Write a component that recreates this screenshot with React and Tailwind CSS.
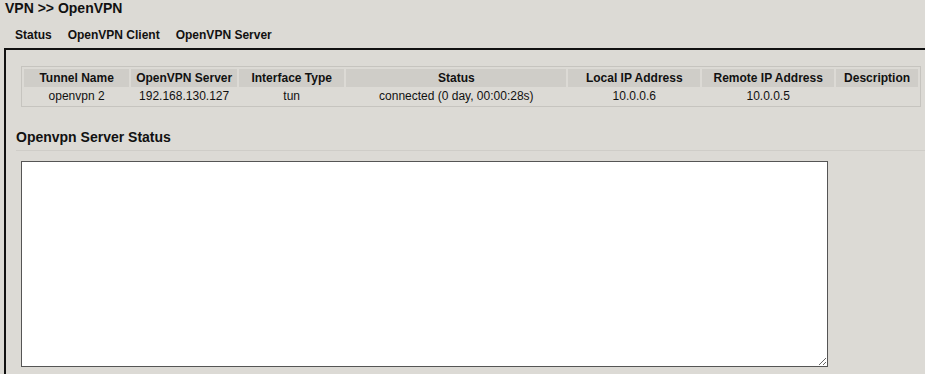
export default function App() {
  const cols = [
    { label: 'Tunnel Name', w: 'w-[106px]', value: 'openvpn 2' },
    { label: 'OpenVPN Server', w: 'w-[106px]', value: '192.168.130.127' },
    { label: 'Interface Type', w: 'w-[106px]', value: 'tun' },
    { label: 'Status', w: 'w-[222px]', value: 'connected (0 day, 00:00:28s)' },
    { label: 'Local IP Address', w: 'w-[133px]', value: '10.0.0.6' },
    { label: 'Remote IP Address', w: 'w-[133px]', value: '10.0.0.5' },
    { label: 'Description', w: 'w-[82px]', value: '' },
  ]

  return (
    <div className="h-[374px] w-[925px] overflow-hidden bg-[#dcdad5] font-['Liberation_Sans',Arial,sans-serif] text-[#111]">
      <h1 className="pl-[5px] pt-0 text-[14px] font-bold leading-[16px]">VPN &gt;&gt; OpenVPN</h1>
      <nav className="mt-[12px] flex gap-[16px] pl-[15px] text-[12px] font-bold leading-[15px]">
        <span>Status</span>
        <span>OpenVPN Client</span>
        <span>OpenVPN Server</span>
      </nav>
      <section className="ml-[4px] mt-[5px] h-[400px] border-l-2 border-t-2 border-[#111] pl-[15px] pt-[16px]">
        <table className="w-[900px] border-separate border-spacing-[2px] border border-[#c6c4bf] text-[12px]">
          <thead>
            <tr>
              {cols.map((c) => (
                <th key={c.label} className={`${c.w} h-[18px] bg-[#cfcdc8] p-0 text-center font-bold leading-[18px]`}>
                  {c.label}
                </th>
              ))}
            </tr>
          </thead>
          <tbody>
            <tr>
              {cols.map((c) => (
                <td key={c.label} className="h-[15px] p-0 text-center leading-[15px]">
                  {c.value}
                </td>
              ))}
            </tr>
          </tbody>
        </table>
        <h2 className="-ml-[5px] mt-[22px] border-b border-[#cfcdc8] pb-[4px] text-[14px] font-bold leading-[17px]">
          Openvpn Server Status
        </h2>
        <textarea
          className="mt-[10px] block h-[206px] w-[807px] border border-[#555] bg-white"
          readOnly
        />
      </section>
    </div>
  )
}
